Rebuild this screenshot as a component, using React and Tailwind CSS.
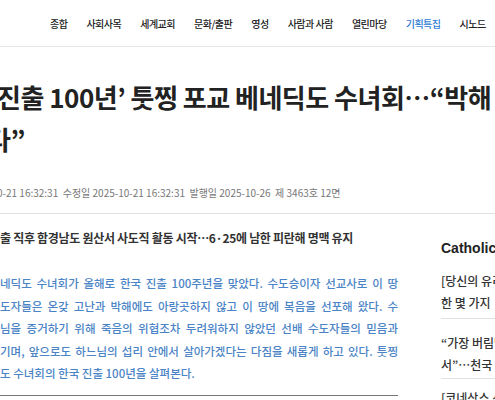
import React from "react";

// ── Data ───────────────────────────────────────────────────
const menu = ["종합", "사회사목", "세계교회", "문화/출판", "영성", "사람과 사람", "열린마당", "기획특집", "시노드"];

const lead = [
  "네딕도 수녀회가 올해로 한국 진출 100주년을 맞았다. 수도승이자 선교사로 이 땅",
  "도자들은 온갖 고난과 박해에도 아랑곳하지 않고 이 땅에 복음을 선포해 왔다. 수",
  "님을 증거하기 위해 죽음의 위협조차 두려워하지 않았던 선배 수도자들의 믿음과",
  "기며, 앞으로도 하느님의 섭리 안에서 살아가겠다는 다짐을 새롭게 하고 있다. 툿찡",
];

// ── Side list item ─────────────────────────────────────────
function SideItem({ lines, className = "" }) {
  return (
    <div className={`text-[12px] leading-[22px] text-[#333] font-medium whitespace-nowrap ${className}`}>
      {lines.map((l) => (
        <div key={l}>{l}</div>
      ))}
    </div>
  );
}

export default function App() {
  return (
    <div className="w-[495px] h-[400px] overflow-hidden bg-white text-[#222] font-['Noto_Sans_CJK_KR','Noto_Sans',sans-serif]">
      {/* top menu */}
      <nav className="h-[47px] border-b border-[#e6e6e6] flex items-center pl-[50px] gap-[19px] whitespace-nowrap text-[10px] tracking-[-0.5px] font-medium">
        {menu.map((m) => (
          <span key={m} className={m === "기획특집" ? "text-[#2c7bd3]" : ""}>
            {m}
          </span>
        ))}
      </nav>

      {/* headline */}
      <h1 className="mt-[29px] text-[26px] font-bold leading-[42px] tracking-[-0.5px] whitespace-nowrap">
        <div className="-ml-[3px]">진출 100년’ 툿찡 포교 베네딕도 수녀회…“박해</div>
        <div className="-ml-[13px]">다”</div>
      </h1>

      {/* meta */}
      <div className="mt-[23px] pb-[10px] border-b border-[#e2e2e2] text-[10px] leading-[20px] text-[#777] whitespace-nowrap -ml-[3px]">
        0-21 16:32:31&nbsp;&nbsp;수정일 2025-10-21 16:32:31&nbsp;&nbsp;발행일 2025-10-26&nbsp;&nbsp;제 3463호 12면
      </div>

      <div className="flex">
        {/* article */}
        <div className="w-[398px] shrink-0">
          <p className="mt-[14px] text-[12px] leading-[20px] font-semibold text-[#333] whitespace-nowrap tracking-[-0.3px]">
            출 직후 함경남도 원산서 사도직 활동 시작…6·25에 남한 피란해 명맥 유지
          </p>
          <div className="mt-[24px] pb-[10px] border-b border-[#777] text-[11.5px] leading-[22.5px] text-[#4b84c6] font-medium">
            {lead.map((l) => (
              <div key={l} className="whitespace-nowrap text-justify [text-align-last:justify]">
                {l}
              </div>
            ))}
            <div className="whitespace-nowrap">도 수녀회의 한국 진출 100년을 살펴본다.</div>
          </div>
        </div>

        {/* sidebar */}
        <aside className="ml-[43px] w-[200px] shrink-0 pt-[24px]">
          <div className="text-[14px] leading-[20px] font-bold font-['Liberation_Sans',sans-serif] text-[#222]">
            Catholic Times
          </div>
          <SideItem className="mt-[12px] pb-[4px] border-b border-[#e2e2e2]" lines={["[당신의 유리", "한 몇 가지"]} />
          <SideItem className="pt-[13px] pb-[2px] border-b border-[#e2e2e2]" lines={["“가장 버림받", "서”…천국 이"]} />
          <SideItem className="pt-[8px]" lines={["[코네상스 선"]} />
        </aside>
      </div>
    </div>
  );
}
